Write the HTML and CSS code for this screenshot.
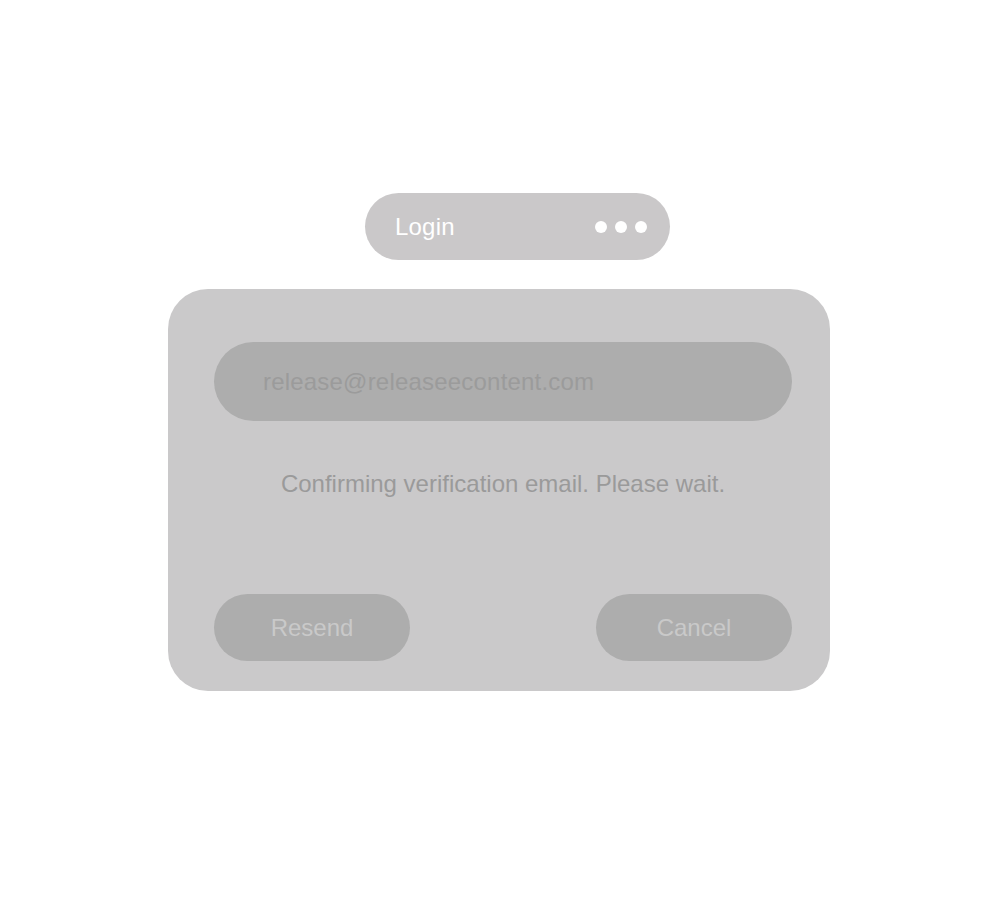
FILE: index.html
```html
<!DOCTYPE html>
<html lang="en">
<head>
<meta charset="utf-8">
<title>Login</title>
<link rel="stylesheet" href="styles.css">
</head>
<body>
<main class="stage">
  <div class="title-pill">
    <span class="title">Login</span>
    <span class="dots"><i></i><i></i><i></i></span>
  </div>
  <section class="card">
    <div class="email-field">release@releaseecontent.com</div>
    <p class="status">Confirming verification email. Please wait.</p>
    <div class="actions">
      <button class="btn">Resend</button>
      <button class="btn">Cancel</button>
    </div>
  </section>
</main>
</body>
</html>
```

FILE: styles.css
```css
html, body {
  margin: 0;
  padding: 0;
  background: #ffffff;
}

body {
  font-family: "Liberation Sans", Arial, Helvetica, sans-serif;
  width: 1000px;
  height: 900px;
}

.stage {
  display: flex;
  flex-direction: column;
  align-items: flex-start;
  padding-top: 193px;
}

.title-pill {
  margin-left: 365px;
  width: 305px;
  height: 67px;
  box-sizing: border-box;
  padding: 0 23px 0 30px;
  border-radius: 34px;
  background: #cac8c9;
  display: flex;
  align-items: center;
  justify-content: space-between;
}

.title {
  color: #ffffff;
  font-size: 24px;
  line-height: 28px;
  letter-spacing: 0.2px;
}

.dots {
  display: flex;
  gap: 8px;
}

.dots i {
  display: block;
  width: 12px;
  height: 12px;
  border-radius: 50%;
  background: #ffffff;
}

.card {
  margin-top: 29px;
  margin-left: 168px;
  width: 662px;
  height: 402px;
  box-sizing: border-box;
  padding: 53px 38px 30px 46px;
  border-radius: 40px;
  background: #cac9ca;
  display: flex;
  flex-direction: column;
}

.email-field {
  height: 79px;
  border-radius: 40px;
  background: #adadad;
  color: #9b9b9b;
  font-size: 24px;
  line-height: 79px;
  padding-left: 49px;
  letter-spacing: 0.2px;
}

.status {
  margin: 49px 0 0;
  text-align: center;
  color: #9a9a9a;
  font-size: 24px;
  line-height: 28px;
  padding-left: 0;
}

.actions {
  margin-top: auto;
  display: flex;
  justify-content: space-between;
}

.btn {
  width: 196px;
  height: 67px;
  border: none;
  border-radius: 34px;
  background: #adadad;
  color: #c9c9c9;
  font-family: "Liberation Sans", Arial, Helvetica, sans-serif;
  font-size: 24px;
  padding: 0;
  cursor: pointer;
}
```
